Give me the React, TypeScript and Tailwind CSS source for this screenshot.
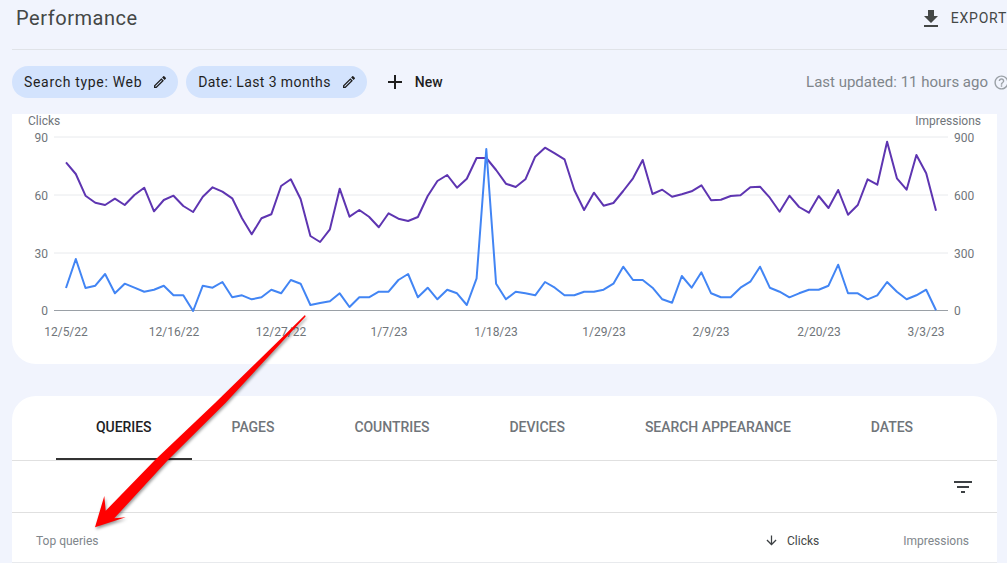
const purple = [
  157, 192, 257, 278, 285, 266, 285, 255, 233, 304, 270, 257, 288, 306, 260, 232, 245, 265, 325, 373, 325, 313, 228, 208, 267, 378, 396,
  358, 236, 320, 300, 320, 352, 310, 326, 333, 321, 258, 213, 195, 233, 206, 144, 144, 180, 221, 231, 208, 140, 113, 130, 148, 240, 300,
  248, 287, 279, 243, 205, 150, 252, 239, 260, 253, 244, 226, 271, 269, 258, 256, 232, 230, 263, 305, 257, 291, 308, 258, 294, 240, 314,
  285, 208, 224, 95, 205, 239, 135, 190, 302,
]

const blue = [
  534, 447, 534, 527, 492, 550, 521, 533, 545, 539, 527, 556, 556, 603, 527, 533, 516, 562, 556, 568, 562, 539, 550, 510, 521, 585, 579,
  574, 550, 591, 562, 562, 545, 545, 510, 492, 562, 533, 568, 539, 550, 585, 505, 117, 521, 568, 545, 550, 556, 516, 533, 556, 556, 545,
  545, 539, 521, 470, 510, 510, 533, 568, 578, 498, 533, 487, 550, 562, 562, 533, 515, 470, 533, 545, 562, 550, 539, 539, 527, 464, 550,
  550, 568, 556, 516, 545, 568, 556, 539, 601,
]

const toPoints = (values: number[]) =>
  values.map((v, i) => `${(66 + i * 9.775).toFixed(1)},${(110 + v / 3).toFixed(1)}`).join(' ')

const dates = [
  { label: '12/5/22', x: 66 },
  { label: '12/16/22', x: 174 },
  { label: '12/27/22', x: 281 },
  { label: '1/7/23', x: 389 },
  { label: '1/18/23', x: 496 },
  { label: '1/29/23', x: 604 },
  { label: '2/9/23', x: 711 },
  { label: '2/20/23', x: 819 },
  { label: '3/3/23', x: 926 },
]

const ticks = [
  { y: 137, left: '90', right: '900' },
  { y: 195, left: '60', right: '600' },
  { y: 253, left: '30', right: '300' },
  { y: 310.5, left: '0', right: '0' },
]

const tabs = ['QUERIES', 'PAGES', 'COUNTRIES', 'DEVICES', 'SEARCH APPEARANCE', 'DATES']

function Icon({ d, size, className }: { d: string; size: number; className?: string }) {
  return (
    <svg width={size} height={size} viewBox="0 0 24 24" fill="currentColor" className={className}>
      <path d={d} />
    </svg>
  )
}

const pencil =
  'M14.06 9.02l.92.92L5.92 19H5v-.92l9.06-9.06M17.66 3c-.25 0-.51.1-.7.29l-1.83 1.83 3.75 3.75 1.83-1.83c.39-.39.39-1.02 0-1.41l-2.34-2.34c-.2-.2-.45-.29-.71-.29zm-3.6 3.19L3 17.25V21h3.75L17.81 9.94l-3.75-3.75z'

function Chip({ label, tracking }: { label: string; tracking: string }) {
  return (
    <div className="flex h-8 items-center gap-[10px] rounded-full bg-[#d3e3fd] pl-3 pr-[10px]">
      <span className={`text-[14px] text-[#1f1f1f] ${tracking}`}>{label}</span>
      <Icon d={pencil} size={16} className="text-[#1f1f1f]" />
    </div>
  )
}

function Chart() {
  return (
    <svg width={985} height={250} viewBox="12 114 985 250" className="block text-[12px]">
      {ticks.map((t, i) => (
        <g key={t.left}>
          <line x1={54} x2={948} y1={t.y} y2={t.y} stroke={i === 3 ? '#9aa0a6' : '#e8eaed'} strokeWidth={1} />
          <text x={48} y={t.y + 4.5} textAnchor="end" fill="#70757a">{t.left}</text>
          <text x={954} y={t.y + 4.5} fill="#70757a">{t.right}</text>
        </g>
      ))}
      <text x={28} y={125} fill="#70757a">Clicks</text>
      <text x={981} y={125} textAnchor="end" fill="#70757a">Impressions</text>
      {dates.map((d) => (
        <text key={d.label} x={d.x} y={336} textAnchor="middle" fill="#70757a">{d.label}</text>
      ))}
      <polyline points={toPoints(purple)} fill="none" stroke="#5e35b1" strokeWidth={2} strokeLinejoin="round" />
      <polyline points={toPoints(blue)} fill="none" stroke="#4285f4" strokeWidth={2} strokeLinejoin="round" />
    </svg>
  )
}

export default function App() {
  return (
    <div className="relative h-[563px] w-[1007px] overflow-hidden bg-[#f1f4fd] font-['Roboto',sans-serif]">
      <header className="ml-3 flex h-[50px] items-center justify-between border-b border-[#e0e3e8] pb-[14px] pl-1">
        <h1 className="text-[20px] tracking-[0.55px] text-[#444746]">Performance</h1>
        <div className="flex items-center gap-2 pt-[2px]">
          <Icon d="M19 9h-4V3H9v6H5l7 7 7-7zM5 18v2h14v-2H5z" size={24} className="text-[#444746]" />
          <span className="text-[14px] tracking-[0.75px] text-[#444746]">EXPORT</span>
        </div>
      </header>

      <div className="-mr-[3px] flex items-center py-4 pl-3">
        <div className="flex gap-2">
          <Chip label="Search type: Web" tracking="tracking-[0.68px]" />
          <Chip label="Date: Last 3 months" tracking="tracking-[0.4px]" />
        </div>
        <Icon
          d="M19 13h-6v6h-2v-6H5v-2h6V5h2v6h6v2z"
          size={24}
          className="ml-4 text-[#1f1f1f]"
        />
        <span className="ml-2 text-[14px] font-medium text-[#1f1f1f]">New</span>
        <div className="ml-auto flex items-center gap-[5px]">
          <span className="text-[15px] text-[#80868b]">Last updated: 11 hours ago</span>
          <Icon
            d="M11 18h2v-2h-2v2zm1-16C6.48 2 2 6.48 2 12s4.48 10 10 10 10-4.48 10-10S17.52 2 12 2zm0 18c-4.41 0-8-3.59-8-8s3.59-8 8-8 8 3.59 8 8-3.59 8-8 8zm0-14c-2.21 0-4 1.79-4 4h2c0-1.1.9-2 2-2s2 .9 2 2c0 2-3 1.75-3 5h2c0-2.25 3-2.5 3-5 0-2.21-1.79-4-4-4z"
            size={17}
            className="text-[#9aa0a6]"
          />
        </div>
      </div>

      <section className="ml-3 h-[250px] w-[985px] rounded-b-3xl bg-white">
        <Chart />
      </section>

      <section className="ml-3 mt-8 w-[985px] rounded-t-3xl bg-white">
        <div className="flex h-[65px] border-b border-[#e0e0e0] pl-[44px]">
          {tabs.map((tab, i) => (
            <div
              key={tab}
              className={
                i === 0
                  ? 'flex h-[64px] items-center border-b-2 border-[#333] px-10 text-[14px] tracking-[-0.05px] text-[#202124] font-medium'
                  : 'flex h-[64px] items-center px-10 pb-[2px] text-[14px] tracking-[-0.03px] text-[#70757a] font-medium'
              }
            >
              {tab}
            </div>
          ))}
        </div>
        <div className="flex h-[52px] items-center justify-end border-b border-[#e0e0e0] pr-[22px]">
          <Icon d="M10 18h4v-2h-4v2zM3 6v2h18V6H3zm3 7h12v-2H6v2z" size={24} className="text-[#3c4043]" />
        </div>
        <div className="flex h-[50px] items-center border-b border-[#e8eaed] pl-6 pr-7 pt-[6px] text-[12px]">
          <span className="text-[#80868b]">Top queries</span>
          <Icon
            d="M20 12l-1.41-1.41L13 16.17V4h-2v12.17l-5.58-5.6L4 12l8 8 8-8z"
            size={15}
            className="ml-auto text-[#3c4043]"
          />
          <span className="ml-[8px] text-[#444746]">Clicks</span>
          <span className="ml-[84px] text-[#80868b]">Impressions</span>
        </div>
      </section>

      <svg
        width={1007}
        height={563}
        viewBox="0 0 1007 563"
        className="pointer-events-none absolute left-0 top-0 drop-shadow-[1px_2px_1.5px_rgba(0,0,0,0.4)]"
      >
        <polygon
          points="305,315 305.6,316.5 225.5,403 168,460 114.3,518.3 125.7,517.3 95,527.3 104.3,496 105.7,510.7 155,460 215,403"
          fill="#ff0000"
        />
      </svg>
    </div>
  )
}
